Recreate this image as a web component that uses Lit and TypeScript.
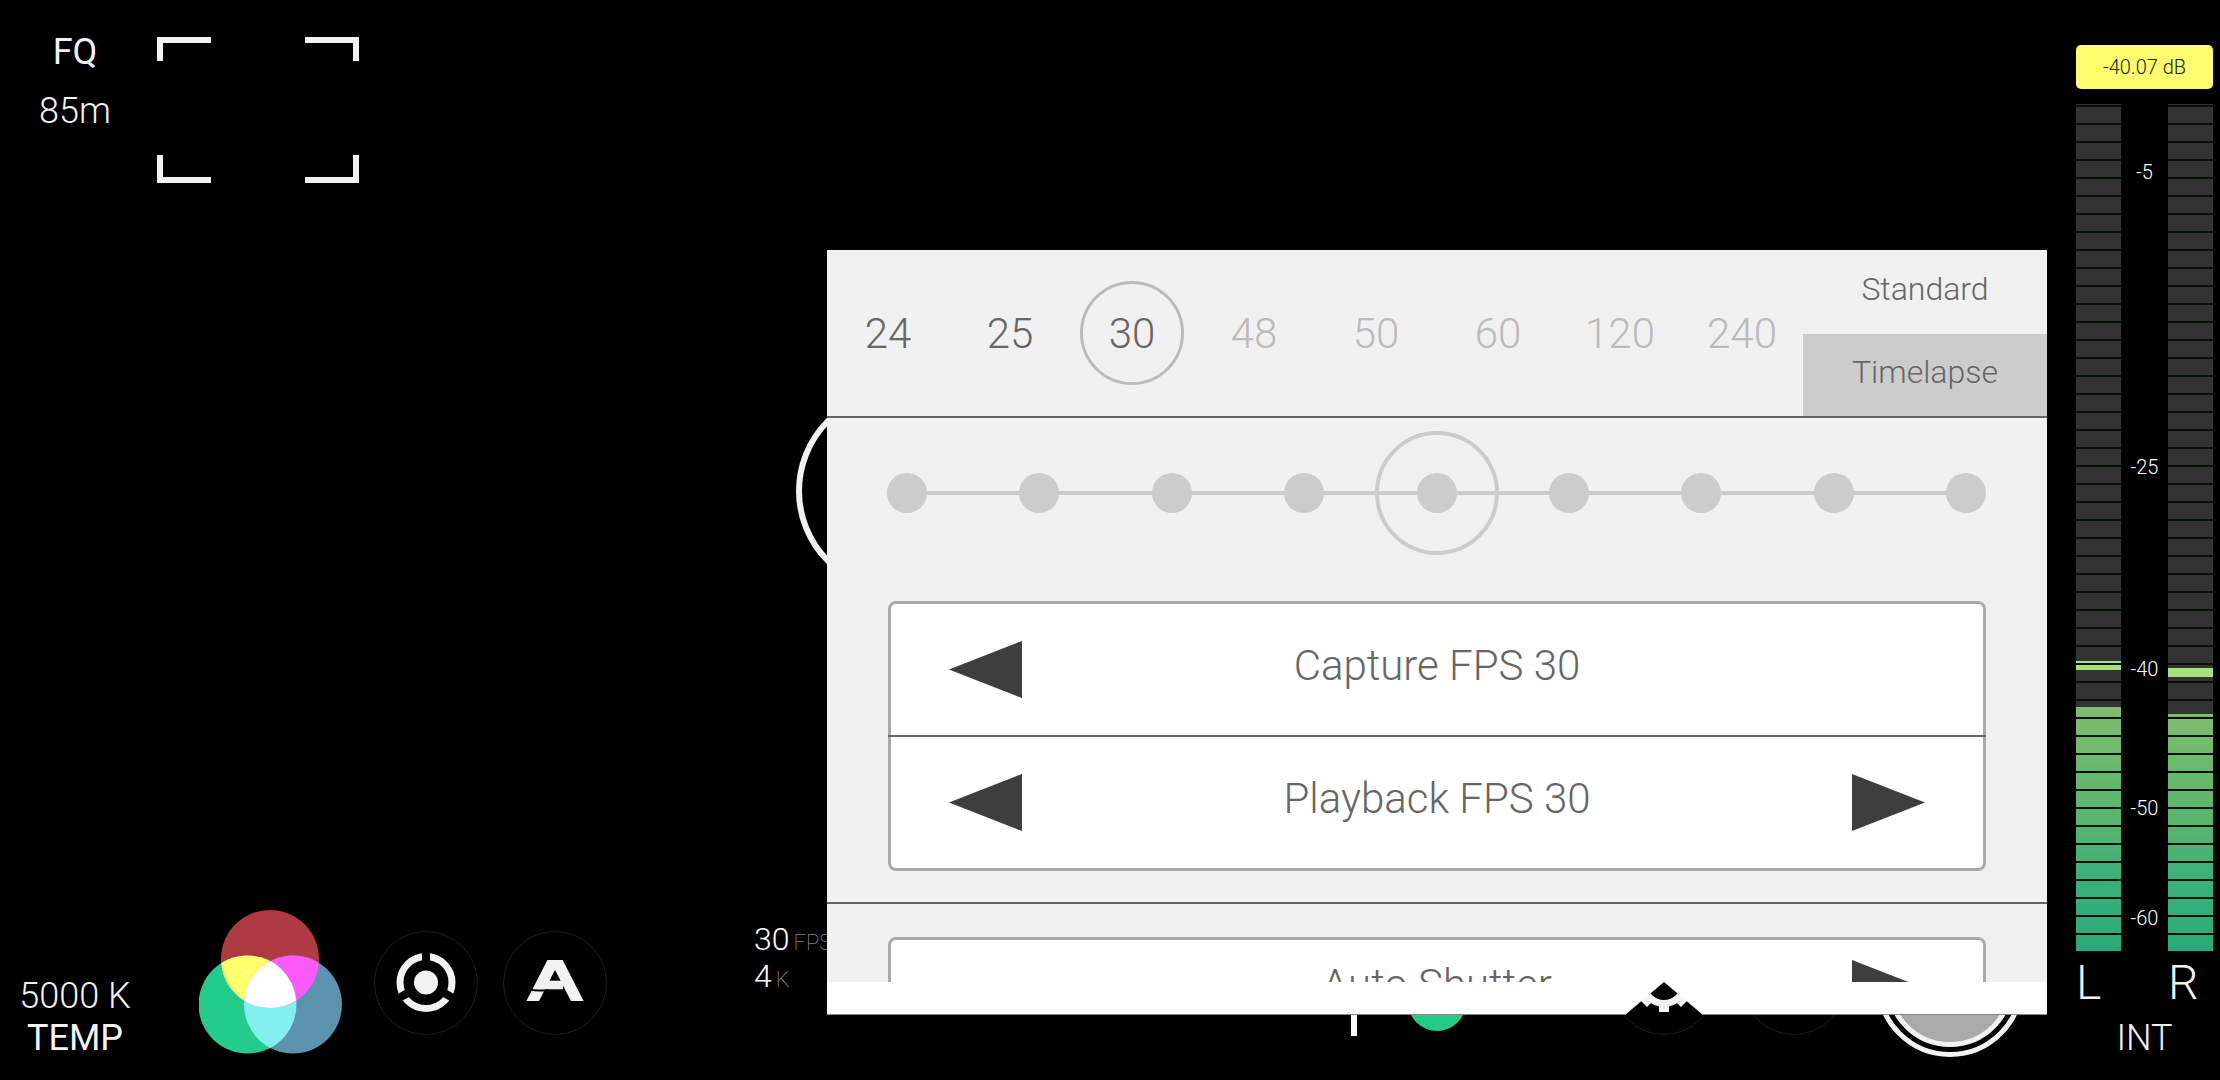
import { LitElement, html, css, svg, nothing } from "lit";
import { customElement, property, state } from "lit/decorators.js";
import { classMap } from "lit/directives/class-map.js";

interface ScaleMark {
  text: string;
  span: number;
}

const RATES = [
  { fps: 24, enabled: true },
  { fps: 25, enabled: true },
  { fps: 30, enabled: true },
  { fps: 48, enabled: false },
  { fps: 50, enabled: false },
  { fps: 60, enabled: false },
  { fps: 120, enabled: false },
  { fps: 240, enabled: false },
];

// span is the distance from the previous mark, as a share of the scale
const MARKS: ScaleMark[] = [
  { text: "-5", span: 78 },
  { text: "-25", span: 295 },
  { text: "-40", span: 202 },
  { text: "-50", span: 139 },
  { text: "-60", span: 110 },
];

@customElement("level-meter")
export class LevelMeter extends LitElement {
  @property({ type: Number }) level = 0;

  static styles = css`
    :host {
      display: flex;
      flex-direction: column;
      justify-content: flex-end;
      position: relative;
      background: #333;
    }
    :host::after {
      content: "";
      position: absolute;
      inset: 0;
      background: linear-gradient(#031003 0 2px, transparent 2px) 0 1px / 100% 18px;
    }
    .peak {
      height: 9px;
      margin-bottom: 37px;
      background: #a8e07e;
    }
    .level {
      background: linear-gradient(#80bb70, #6cba6c 20%, #56b470 50%, #3bb07a 70%, #29aa7a);
    }
  `;

  render() {
    return html`
      <div class="peak"></div>
      <div class="level" style="height:${this.level}%"></div>
    `;
  }
}

@customElement("stepper-row")
export class StepperRow extends LitElement {
  @property() label = "";
  @property({ type: Boolean }) prev = false;
  @property({ type: Boolean }) next = false;

  static styles = css`
    :host {
      display: grid;
      grid-template-columns: 73px 1fr 73px;
      align-items: center;
      padding: 0 58px;
    }
    button {
      display: flex;
      padding: 0;
      border: 0;
      background: none;
    }
    .label {
      grid-column: 2;
      padding-bottom: 8px;
      text-align: center;
      line-height: 48px;
    }
    svg {
      fill: #3e3e3e;
    }
  `;

  render() {
    return html`
      ${this.prev
        ? html`<button aria-label="Previous, ${this.label}">
            <svg width="73" height="57" viewBox="0 0 73 57"><path d="M73 0v57L0 28.5z" /></svg>
          </button>`
        : nothing}
      <span class="label">${this.label}</span>
      ${this.next
        ? html`<button aria-label="Next, ${this.label}">
            <svg width="73" height="57" viewBox="0 0 73 57"><path d="M0 0v57l73-28.5z" /></svg>
          </button>`
        : nothing}
    `;
  }
}

@customElement("fps-panel")
export class FpsPanel extends LitElement {
  @state() private fps = 30;
  @state() private mode = "Standard";

  static styles = css`
    :host {
      display: flex;
      flex-direction: column;
      color: #666;
      font-size: 42px;
    }
    button {
      font: inherit;
      color: inherit;
      border: 0;
      padding: 0;
      background: none;
    }
    .scroll {
      flex: 1;
      min-height: 0;
      overflow: hidden;
      background: #f1f1f1;
    }
    .header {
      display: grid;
      grid-template-columns: 4fr 1fr;
      height: 166px;
      border-bottom: 2px solid #666;
    }
    .rates {
      display: grid;
      grid-template-columns: repeat(8, 1fr);
      align-items: center;
      justify-items: center;
    }
    .rate {
      width: 104px;
      height: 104px;
      box-sizing: border-box;
      border: 3px solid transparent;
      border-radius: 50%;
    }
    .rate:disabled {
      color: #bbb;
    }
    .rate.on {
      border-color: #bbb;
    }
    .modes {
      display: grid;
      grid-template-rows: 84px 1fr;
      font-size: 32px;
      line-height: 40px;
    }
    .mode {
      padding-bottom: 6px;
      background: #ccc;
    }
    .mode.on {
      background: none;
    }
    .speed {
      display: grid;
      padding: 13px 19px 46px 18px;
    }
    .dots,
    input {
      grid-area: 1 / 1;
    }
    .dots {
      display: flex;
      justify-content: space-between;
      align-items: center;
      margin: 0 42px;
      background: linear-gradient(#ccc, #ccc) center / calc(100% - 20px) 4px no-repeat;
    }
    .dot {
      width: 40px;
      height: 40px;
      border-radius: 50%;
      background: #ccc;
    }
    input {
      appearance: none;
      width: 100%;
      height: 124px;
      margin: 0;
      background: none;
    }
    input::-webkit-slider-thumb {
      appearance: none;
      width: 124px;
      height: 124px;
      box-sizing: border-box;
      border: 4px solid #ccc;
      border-radius: 50%;
      background: none;
    }
    .box {
      margin: 0 61px 31px;
      border: 3px solid #aaa;
      border-radius: 8px;
      background: #fff;
    }
    .row {
      height: 131px;
    }
    .row.short {
      height: 97px;
    }
    .rule {
      height: 2px;
      background: #666;
    }
    .box .rule {
      margin: 0 -3px;
    }
    .auto {
      padding-top: 33px;
    }
    /* white lip with a notch pointing at the settings button below */
    .lip {
      height: 32px;
      background: #fff;
      border-bottom: 1px solid #888;
      clip-path: polygon(
        0 0,
        100% 0,
        100% 100%,
        calc(100% - 344px) 100%,
        calc(100% - 383px) 0,
        calc(100% - 422px) 100%,
        0 100%
      );
    }
  `;

  render() {
    return html`
      <div class="scroll">
        <div class="header">
          <div class="rates">
            ${RATES.map(
              (r) => html`<button
                class=${classMap({ rate: true, on: r.fps === this.fps })}
                ?disabled=${!r.enabled}
                aria-pressed=${r.fps === this.fps}
                @click=${() => (this.fps = r.fps)}
              >
                ${r.fps}
              </button>`,
            )}
          </div>
          <div class="modes">
            ${["Standard", "Timelapse"].map(
              (m) => html`<button
                class=${classMap({ mode: true, on: m === this.mode })}
                aria-pressed=${m === this.mode}
                @click=${() => (this.mode = m)}
              >
                ${m}
              </button>`,
            )}
          </div>
        </div>
        <div class="speed">
          <div class="dots">${Array.from({ length: 9 }, () => html`<span class="dot"></span>`)}</div>
          <input type="range" min="0" max="8" step="1" value="4" aria-label="Speed" />
        </div>
        <div class="box">
          <stepper-row class="row" label="Capture FPS 30" prev></stepper-row>
          <div class="rule"></div>
          <stepper-row class="row" label="Playback FPS 30" prev next></stepper-row>
        </div>
        <div class="rule"></div>
        <div class="auto">
          <div class="box">
            <stepper-row class="row short" label="Auto Shutter" next></stepper-row>
          </div>
        </div>
      </div>
      <div class="lip"></div>
    `;
  }
}

@customElement("app-root")
export class AppRoot extends LitElement {
  static styles = css`
    :host {
      display: grid;
      grid-template-columns: 150px 1fr 151px;
      position: relative;
      height: 100vh;
      overflow: hidden;
      background: #000;
      color: #f2f2f2;
      font-family: Roboto, "Liberation Sans", sans-serif;
      font-weight: 300;
      font-size: 36px;
    }
    button {
      display: flex;
      justify-content: center;
      padding: 0;
      border: 0;
      background: none;
      color: inherit;
      font: inherit;
    }
    .side {
      display: flex;
      flex-direction: column;
      align-items: center;
      line-height: 42px;
    }
    .focus {
      gap: 17px;
      padding: 31px 0 21px;
    }
    .strong {
      font-weight: 400;
    }
    .temp {
      display: flex;
      flex-direction: column;
      align-items: center;
      margin-top: auto;
    }
    .view {
      display: flex;
      flex-direction: column;
      justify-content: space-between;
      align-items: flex-start;
      min-width: 0;
    }
    .reticle {
      margin: 37px 7px;
    }
    .toolbar {
      display: flex;
      align-items: center;
      align-self: stretch;
      padding: 0 45px 23px 49px;
    }
    .imaging {
      margin-right: 32px;
    }
    .stabilise {
      margin-right: 25px;
    }
    .readout {
      margin: 0 auto 0 147px;
      padding-bottom: 50px;
      font-size: 32px;
      line-height: 37px;
      color: #fff;
    }
    .unit {
      margin-left: 4px;
      font-size: 22px;
      line-height: 22px;
      font-weight: 100;
      color: #aaa;
    }
    .handle {
      margin-right: 146px;
    }
    .tools {
      display: flex;
      align-items: center;
      gap: 26px;
    }
    .record {
      margin-left: 4px;
    }
    .ring {
      position: absolute;
      left: 796px;
      top: 389px;
    }
    .audio {
      display: flex;
      flex-direction: column;
      padding: 45px 7px 18px;
    }
    .db {
      margin-bottom: 15px;
      border-radius: 5px;
      background: #fdfd6e;
      color: #222;
      font-size: 20px;
      line-height: 44px;
      text-align: center;
    }
    .meters {
      flex: 1;
      display: grid;
      grid-template-columns: 45px 1fr 45px;
      min-height: 0;
    }
    .scale {
      display: flex;
      flex-direction: column;
      color: #fff;
      font-size: 20px;
      line-height: 20px;
      text-align: center;
    }
    .mark {
      display: flex;
      flex-basis: 0;
      align-items: flex-end;
      justify-content: center;
    }
    .rest {
      flex: 23 0 0;
    }
    .channels {
      display: grid;
      grid-template-columns: 45px 1fr 45px;
      font-size: 48px;
      line-height: 64px;
    }
    .right {
      grid-column: 3;
    }
    .source {
      line-height: 47px;
    }
    fps-panel {
      position: absolute;
      left: calc(50% - 283px);
      right: 173px;
      top: 250px;
      bottom: 65px;
    }
  `;

  private reticle() {
    return html`<svg class="reticle" width="202" height="146" viewBox="0 0 202 146" fill="none" stroke="#f2f2f2" stroke-width="6" aria-hidden="true">
      <path d="M54 3H3v21M148 3h51v21M3 118v25h51M199 118v25h-51" />
    </svg>`;
  }

  private imaging() {
    return html`<svg width="143" height="146" viewBox="0 0 143 146" aria-hidden="true">
      <defs>
        <clipPath id="r"><circle cx="71" cy="49" r="49" /></clipPath>
        <clipPath id="g"><circle cx="48.500" cy="94.500" r="49" /></clipPath>
        <clipPath id="rg" clip-path="url(#r)"><circle cx="48.500" cy="94.500" r="49" /></clipPath>
      </defs>
      <circle cx="71" cy="49" r="49" fill="#b03a43" />
      <circle cx="48.500" cy="94.500" r="49" fill="#23cc8a" />
      <circle cx="94" cy="94.500" r="49" fill="#5b92ad" />
      <circle cx="94" cy="94.500" r="49" fill="#82f0ee" clip-path="url(#g)" />
      <circle cx="48.500" cy="94.500" r="49" fill="#ffff6e" clip-path="url(#r)" />
      <circle cx="94" cy="94.500" r="49" fill="#fa5afa" clip-path="url(#r)" />
      <circle cx="94" cy="94.500" r="49" fill="#fff" clip-path="url(#rg)" />
    </svg>`;
  }

  private round(content: unknown) {
    return html`<svg width="104" height="104" viewBox="0 0 104 104" fill="none" aria-hidden="true">
      <circle cx="52" cy="52" r="51.500" fill="#000" stroke="#1e1e1e" />
      ${content}
    </svg>`;
  }

  private stabiliseIcon() {
    return svg`
      <circle cx="52" cy="51.500" r="26" stroke="#f2f2f2" stroke-width="7" />
      <path d="M52 51.500V18M52 51.500l30 17.300M52 51.500l-30 17.300" stroke="#000" stroke-width="8" />
      <circle cx="52" cy="51.500" r="12" fill="#f2f2f2" />`;
  }

  private autoIcon() {
    return svg`
      <svg x="20" y="29" width="64" height="41" viewBox="20 29 64 41" stroke="#f2f2f2">
        <path d="M24.600 80L55.900 19" stroke-width="11.300" />
        <path d="M79.400 80L48.200 19" stroke-width="11.300" />
        <path d="M36 54h24" stroke-width="8.600" />
        <path d="M27 58.500q3 1 9 1h10" stroke="#000" stroke-width="2" />
      </svg>`;
  }

  private gearIcon() {
    return svg`
      <circle cx="52" cy="52" r="20.500" stroke="#f2f2f2" stroke-width="7" />
      ${[0, 45, 90, 135].map(
        (a) => svg`<path d="M52 23v7M52 74v7" transform="rotate(${a} 52 52)" stroke="#f2f2f2" stroke-width="10" />`,
      )}`;
  }

  render() {
    return html`
      <div class="side focus">
        <button class="strong">FQ</button>
        <button>85m</button>
        <button class="temp"><span>5000 K</span><span class="strong">TEMP</span></button>
      </div>

      <main class="view">
        ${this.reticle()}
        <div class="toolbar">
          <button class="imaging" aria-label="Imaging">${this.imaging()}</button>
          <button class="stabilise" aria-label="Stabilisation">${this.round(this.stabiliseIcon())}</button>
          <button aria-label="Automatic mode">${this.round(this.autoIcon())}</button>
          <div class="readout">
            <div>30<span class="unit">FPS</span></div>
            <div>4<span class="unit">K</span></div>
          </div>
          <svg class="handle" width="115" height="106" viewBox="0 0 115 106" aria-hidden="true">
            <path d="M3 0v106" stroke="#fff" stroke-width="6" />
            <circle cx="86" cy="72" r="29" fill="#23cc8a" />
          </svg>
          <div class="tools">
            <button aria-label="Settings">${this.round(this.gearIcon())}</button>
            <button aria-label="Playback">${this.round(nothing)}</button>
            <button class="record" aria-label="Record">
              <svg width="148" height="148" viewBox="0 0 148 148" fill="none" stroke="#f2f2f2" aria-hidden="true">
                <circle cx="74" cy="74" r="71.500" stroke-width="5" />
                <circle cx="74" cy="74" r="61.500" stroke-width="5" fill="#aaa" />
              </svg>
            </button>
          </div>
        </div>
      </main>

      <aside class="audio">
        <div class="db">-40.07 dB</div>
        <div class="meters">
          <level-meter level="28.8"></level-meter>
          <div class="scale">
            ${MARKS.map((m) => html`<div class="mark" style="flex-grow:${m.span}">${m.text}</div>`)}
            <div class="rest"></div>
          </div>
          <level-meter level="28"></level-meter>
        </div>
        <div class="channels"><span>L</span><span class="right">R</span></div>
        <button class="source">INT</button>
      </aside>

      <svg class="ring" width="204" height="204" viewBox="0 0 204 204" fill="none" aria-hidden="true">
        <circle cx="102" cy="102" r="99" stroke="#f2f2f2" stroke-width="6" />
      </svg>

      <fps-panel></fps-panel>
    `;
  }
}
